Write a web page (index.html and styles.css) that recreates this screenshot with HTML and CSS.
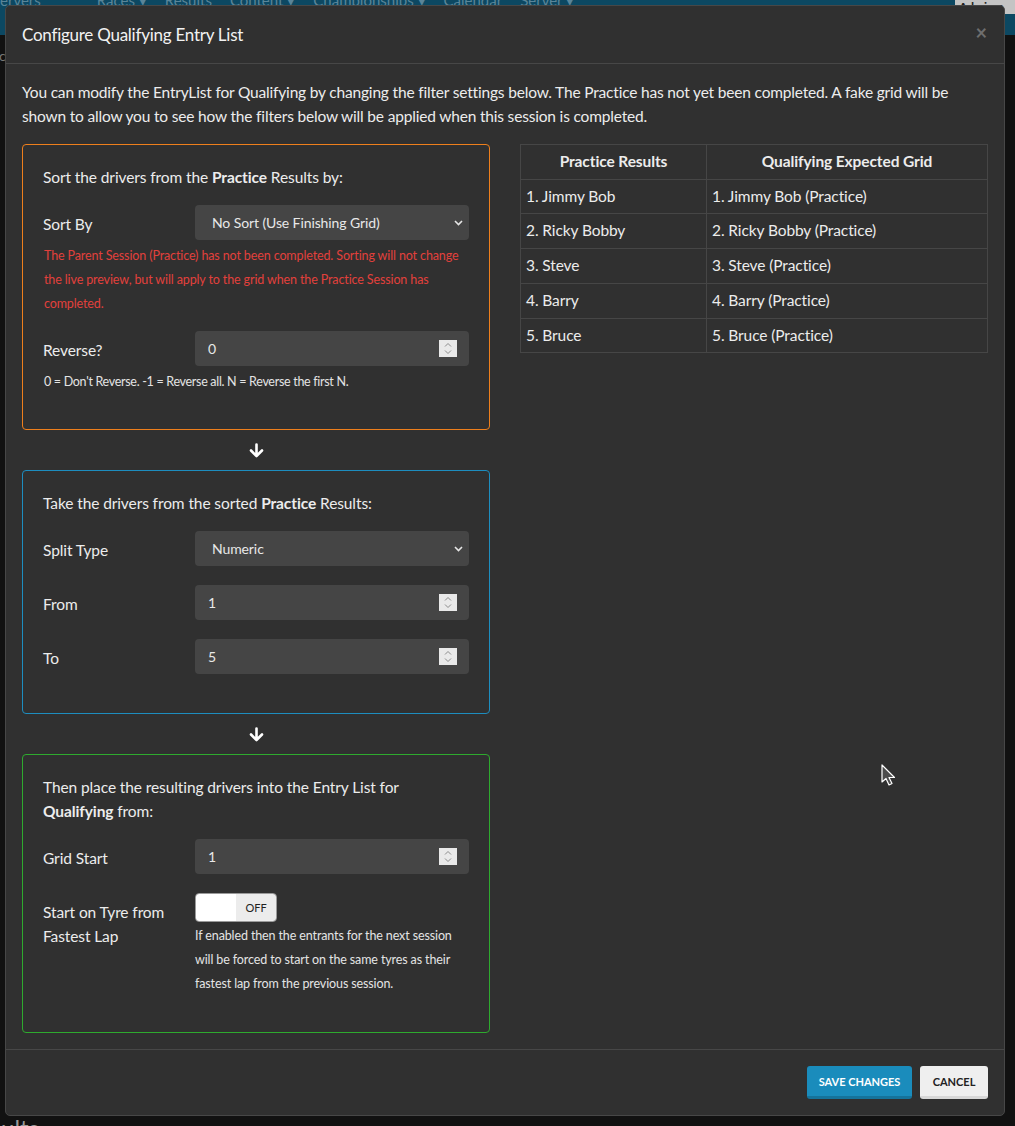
FILE: index.html
```html
<!DOCTYPE html>
<html>
<head>
<meta charset="utf-8">
<link rel="stylesheet" href="styles.css">
</head>
<body>
<div class="page">
  <nav class="navbar">
    <span class="brand">ervers</span>
    <span class="nav-item">Races ▾</span>
    <span class="nav-item">Results</span>
    <span class="nav-item">Content ▾</span>
    <span class="nav-item">Championships ▾</span>
    <span class="nav-item">Calendar</span>
    <span class="nav-item">Server ▾</span>
    <span class="admin">Admin p</span>
  </nav>
  <div class="page-c">c</div>
  <div class="page-heading">ults</div>
</div>

<div class="modal">
  <div class="modal-header">
    <h5 class="modal-title">Configure Qualifying Entry List</h5>
    <span class="close">×</span>
  </div>
  <div class="modal-body">
    <p class="intro">You can modify the EntryList for Qualifying by changing the filter settings below. The Practice has not yet been completed. A fake grid will be shown to allow you to see how the filters below will be applied when this session is completed.</p>
    <div class="row">
      <div class="col">
        <div class="box box-orange">
          <p class="box-text">Sort the drivers from the <b>Practice</b> Results by:</p>
          <div class="form-group">
            <label class="label">Sort By</label>
            <div class="control select">
              <span class="value">No Sort (Use Finishing Grid)</span>
              <svg class="chev" width="9" height="6" viewBox="0 0 9 6"><path d="M1 1l3.5 3.5L8 1" fill="none" stroke="#e6e6e6" stroke-width="1.6"/></svg>
            </div>
            <div class="help help-red help-wide">The Parent Session (Practice) has not been completed. Sorting will not change the live preview, but will apply to the grid when the Practice Session has completed.</div>
          </div>
          <div class="form-group">
            <label class="label">Reverse?</label>
            <div class="control input">
              <span class="value">0</span>
              <span class="spin"><svg width="18" height="17" viewBox="0 0 18 17"><path d="M6 6.5l3-3 3 3M6 10.5l3 3 3-3" fill="none" stroke="#8c8c8c" stroke-width="1"/></svg></span>
            </div>
            <div class="help help-wide help-num">0 = Don't Reverse. -1 = Reverse all. N = Reverse the first N.</div>
          </div>
        </div>

        <div class="arrow"><svg width="15" height="15" viewBox="0 0 15 15"><path d="M7.5 1.5v11M2 7.5l5.5 5.5 5.5-5.5" fill="none" stroke="#fff" stroke-width="2.6" stroke-linecap="round" stroke-linejoin="round"/></svg></div>

        <div class="box box-blue">
          <p class="box-text">Take the drivers from the sorted <b>Practice</b> Results:</p>
          <div class="form-group">
            <label class="label">Split Type</label>
            <div class="control select">
              <span class="value">Numeric</span>
              <svg class="chev" width="9" height="6" viewBox="0 0 9 6"><path d="M1 1l3.5 3.5L8 1" fill="none" stroke="#e6e6e6" stroke-width="1.6"/></svg>
            </div>
          </div>
          <div class="form-group">
            <label class="label">From</label>
            <div class="control input">
              <span class="value">1</span>
              <span class="spin"><svg width="18" height="17" viewBox="0 0 18 17"><path d="M6 6.5l3-3 3 3M6 10.5l3 3 3-3" fill="none" stroke="#8c8c8c" stroke-width="1"/></svg></span>
            </div>
          </div>
          <div class="form-group">
            <label class="label">To</label>
            <div class="control input">
              <span class="value">5</span>
              <span class="spin"><svg width="18" height="17" viewBox="0 0 18 17"><path d="M6 6.5l3-3 3 3M6 10.5l3 3 3-3" fill="none" stroke="#8c8c8c" stroke-width="1"/></svg></span>
            </div>
          </div>
        </div>

        <div class="arrow"><svg width="15" height="15" viewBox="0 0 15 15"><path d="M7.5 1.5v11M2 7.5l5.5 5.5 5.5-5.5" fill="none" stroke="#fff" stroke-width="2.6" stroke-linecap="round" stroke-linejoin="round"/></svg></div>

        <div class="box box-green">
          <p class="box-text">Then place the resulting drivers into the Entry List for <b>Qualifying</b> from:</p>
          <div class="form-group">
            <label class="label">Grid Start</label>
            <div class="control input">
              <span class="value">1</span>
              <span class="spin"><svg width="18" height="17" viewBox="0 0 18 17"><path d="M6 6.5l3-3 3 3M6 10.5l3 3 3-3" fill="none" stroke="#8c8c8c" stroke-width="1"/></svg></span>
            </div>
          </div>
          <div class="form-group last">
            <label class="label">Start on Tyre from Fastest Lap</label>
            <div class="field">
              <div class="toggle"><span class="toggle-on"></span><span class="toggle-off">OFF</span></div>
              <div class="help help-toggle">If enabled then the entrants for the next session will be forced to start on the same tyres as their fastest lap from the previous session.</div>
            </div>
          </div>
        </div>
      </div>

      <div class="col">
        <table class="grid">
          <thead>
            <tr><th class="c1">Practice Results</th><th>Qualifying Expected Grid</th></tr>
          </thead>
          <tbody>
            <tr><td>1. Jimmy Bob</td><td>1. Jimmy Bob (Practice)</td></tr>
            <tr><td>2. Ricky Bobby</td><td>2. Ricky Bobby (Practice)</td></tr>
            <tr><td>3. Steve</td><td>3. Steve (Practice)</td></tr>
            <tr><td>4. Barry</td><td>4. Barry (Practice)</td></tr>
            <tr><td>5. Bruce</td><td>5. Bruce (Practice)</td></tr>
          </tbody>
        </table>
      </div>
    </div>
  </div>
  <div class="modal-footer">
    <button class="btn btn-primary">SAVE CHANGES</button>
    <button class="btn btn-light">CANCEL</button>
  </div>
</div>

<svg class="cursor" width="16" height="24" viewBox="0 0 16 24"><path d="M1 1v17l4-3.5 3 6.5 3-1.5-3-6h5.5z" fill="#4d4d4d" stroke="#fff" stroke-width="1.2" stroke-linejoin="round"/></svg>
</body>
</html>
```

FILE: styles.css
```css
html, body {
  margin: 0;
  padding: 0;
}
body {
  background: #111;
  font-family: Lato, "Noto Sans", sans-serif;
  color: #ececec;
  width: 1015px;
  height: 1126px;
  overflow: hidden;
  position: relative;
}
.page {
  height: 1126px;
  display: flex;
  flex-direction: column;
}
.navbar {
  height: 35px;
  background: #0c4862;
  display: flex;
  align-items: flex-start;
  gap: 18px;
  font-size: 15px;
  color: #5a8599;
  overflow: hidden;
}
.navbar span {
  line-height: 20px;
  margin-top: -10px;
}
.navbar .brand {
  margin-right: 38px;
}
.navbar .admin {
  margin-left: auto;
  margin-top: 0;
  height: 14px;
  line-height: 14px;
  width: 56px;
  padding-left: 4px;
  background: #c4c4c4;
  color: #222;
  font-weight: bold;
  font-size: 12px;
  overflow: hidden;
}
.page-c {
  font-size: 14px;
  color: #777;
  margin-top: 12px;
  margin-left: -1px;
}
.page-heading {
  margin-top: auto;
  font-size: 24px;
  line-height: 20px;
  height: 8px;
  color: #9a9a9a;
  padding-left: 1px;
}

.modal {
  position: absolute;
  left: 5px;
  top: 5px;
  width: 1000px;
  box-sizing: border-box;
  background: #303030;
  border: 1px solid #474747;
  border-radius: 5px;
}
.modal-header {
  display: flex;
  justify-content: space-between;
  align-items: center;
  padding: 15px 16px;
  border-bottom: 1px solid #474747;
}
.modal-title {
  margin: 0;
  font-size: 17px;
  line-height: 27px;
  font-weight: normal;
  letter-spacing: -0.25px;
  color: #f2f2f2;
}
.close {
  font-size: 20px;
  line-height: 20px;
  color: #6e6e6e;
  font-weight: bold;
  margin-right: 1px;
  margin-top: -6px;
}
.modal-body {
  padding: 16px;
  font-size: 15.5px;
  line-height: 24px;
  letter-spacing: -0.1px;
}
.intro {
  margin: 0 0 16px;
  letter-spacing: -0.18px;
}
.row {
  display: grid;
  grid-template-columns: 1fr 1fr;
  column-gap: 30px;
  align-items: start;
}
.box {
  border: 1px solid;
  border-radius: 4px;
  padding: 20px;
}
.box-orange { border-color: #ee7f1c; }
.box-blue { border-color: #1d8dbf; }
.box-green { border-color: #2eaa2e; }
.box-text {
  margin: 0 0 16px;
}
.box-text b {
  font-weight: bold;
}
.form-group {
  display: grid;
  grid-template-columns: 122px 1fr;
  column-gap: 30px;
  margin-bottom: 19px;
}
.form-group.last {
  margin-bottom: 20px;
}
.label {
  padding-top: 7px;
}
.control {
  height: 35px;
  box-sizing: border-box;
  background: #454545;
  border-radius: 4px;
  display: flex;
  align-items: center;
  font-size: 14px;
  letter-spacing: -0.1px;
  color: #e8e8e8;
}
.select {
  padding: 0 6px 0 17px;
}
.input {
  padding: 0 12px 0 13px;
}
.value {
  flex: 1;
}
.spin {
  display: block;
  width: 18px;
  height: 17px;
  background: #e9e9e9;
}
.spin svg {
  display: block;
}
.help {
  margin-top: 4px;
  margin-bottom: -4px;
  font-size: 12.5px;
  line-height: 24px;
  color: #e4e4e4;
  letter-spacing: -0.12px;
}
.help-wide {
  grid-column: 1 / -1;
  padding-left: 1px;
}
.help-num {
  margin-top: 4px;
  letter-spacing: -0.3px;
}
.help-red {
  color: #e2403c;
}
.help-toggle {
  margin-top: 2px;
}
.toggle {
  width: 82px;
  height: 29px;
  box-sizing: border-box;
  border: 1px solid #9a9a9a;
  border-radius: 4px;
  display: flex;
  overflow: hidden;
}
.toggle-on {
  width: 40px;
  background: #fff;
}
.toggle-off {
  flex: 1;
  background: #ececec;
  color: #222;
  font-size: 11px;
  letter-spacing: 0;
  display: flex;
  align-items: center;
  justify-content: center;
}
.arrow {
  height: 40px;
  display: flex;
  align-items: center;
  justify-content: center;
}
.arrow svg {
  display: block;
}
.grid {
  width: 100%;
  border-collapse: collapse;
}
.grid th, .grid td {
  border: 1px solid #464646;
  padding: 5px;
  line-height: 23.7px;
  text-align: left;
}
.grid th {
  text-align: center;
  font-weight: bold;
}
.grid .c1 {
  width: 175px;
}
.modal-footer {
  border-top: 1px solid #474747;
  padding: 16px;
  display: flex;
  justify-content: flex-end;
  gap: 8px;
}
.btn {
  height: 33px;
  box-sizing: border-box;
  border: none;
  border-radius: 3px;
  font-family: Lato, "Noto Sans", sans-serif;
  font-size: 11px;
  font-weight: bold;
  padding: 0;
  white-space: nowrap;
  text-align: center;
  border-bottom: 3px solid;
}
.btn-primary {
  background: #1a8cbc;
  border-bottom-color: #15739b;
  color: #fff;
  width: 105px;
}
.btn-light {
  background: #efefef;
  border-bottom-color: #d8d8d8;
  color: #222;
  width: 68px;
}
.cursor {
  position: absolute;
  left: 881px;
  top: 764px;
}
```
